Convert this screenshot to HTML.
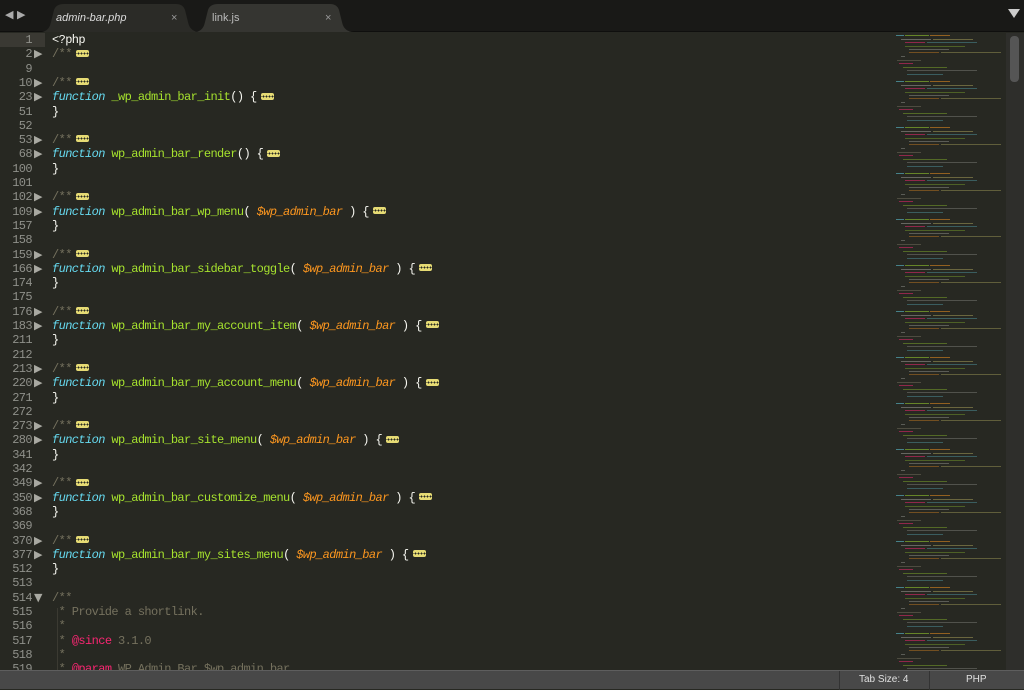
<!DOCTYPE html>
<html><head><meta charset="utf-8"><style>
*{margin:0;padding:0;box-sizing:border-box}
body{width:1024px;height:689px;overflow:hidden;background:#272822;font-family:"Liberation Mono",monospace;position:relative}
#tabs{position:absolute;left:0;top:0;width:1024px;height:32px;background:#191917;border-bottom:1px solid #0f0f0e}
.tab{position:absolute;top:4px;height:28px;font-family:"Liberation Sans",sans-serif;font-size:11px;color:#ddd;line-height:28px}
.tab .bg{position:absolute;inset:0}
.tab span{position:relative}
#ed{position:absolute;left:0;top:33px;width:893px;height:637px;background:#272822;overflow:hidden}
.ln{position:absolute;left:0;width:32px;text-align:right;color:#8f908a;font-size:12px;letter-spacing:-0.6px;line-height:14px}
.fa{position:absolute;left:34px;color:#a9a9a2;font-size:11px;line-height:14px;font-family:"DejaVu Sans",sans-serif}
.code{position:absolute;left:52px;font-size:12px;letter-spacing:-0.6px;line-height:14px;color:#f8f8f2;white-space:pre}
.k{color:#66d9ef;font-style:italic}.f{color:#a6e22e}.p{color:#fd971f;font-style:italic}.c{color:#75715e}.t{color:#f92672}
.b{display:inline-block;width:13px;height:7px;background:#e6db74;border-radius:2px;vertical-align:middle;margin-left:4px;position:relative;top:-1px;background-image:radial-gradient(circle,#272822 0.8px,transparent 1px);background-size:3px 7px;background-position:1px 0}
</style></head><body>
<div id="tabs">
<div style="position:absolute;left:5px;top:8px;color:#aaa;font-size:11px;font-family:'DejaVu Sans'">◀ ▶</div>
<div class="tab" style="left:40px;width:160px"><svg class="bg" width="160" height="28"><path d="M0 28 Q9 28 11 18 L14 6 Q16 0 24 0 L136 0 Q143 0 145 6 L148 18 Q150 28 160 28Z" fill="#2b2b27"/></svg><span style="left:16px;font-style:italic">admin-bar.php</span><span style="position:absolute;left:131px;color:#999">×</span></div>
<div class="tab" style="left:194px;width:160px"><svg class="bg" width="160" height="28"><path d="M0 28 Q9 28 11 18 L14 6 Q16 0 24 0 L136 0 Q143 0 145 6 L148 18 Q150 28 160 28Z" fill="#353531"/></svg><span style="left:18px;color:#bbb">link.js</span><span style="position:absolute;left:131px;color:#999">×</span></div>
<div style="position:absolute;left:1008px;top:9px;width:0;height:0;border-left:6px solid transparent;border-right:6px solid transparent;border-top:9px solid #ccc"></div>
</div>
<div id="ed">
<div style="position:absolute;left:0;top:0;width:45px;height:14px;background:#3a3933"></div>
<div style="position:absolute;left:57px;top:575px;width:1px;height:70px;background:#3b3a32"></div>
</div>
<svg style="position:absolute;left:893px;top:33px" width="131" height="637">
<defs><pattern id="mm" width="120" height="46" patternUnits="userSpaceOnUse">
<rect x="3" y="2" width="8" height="1" fill="#66d9ef"/><rect x="12" y="2" width="24" height="1" fill="#a6e22e"/><rect x="37" y="2" width="20" height="1" fill="#fd971f"/>
<rect x="8" y="6" width="30" height="1" fill="#f8f8f2" opacity=".6"/><rect x="40" y="6" width="40" height="1" fill="#e6db74" opacity=".7"/>
<rect x="12" y="9" width="20" height="1" fill="#f92672"/><rect x="34" y="9" width="50" height="1" fill="#66d9ef" opacity=".6"/>
<rect x="12" y="13" width="60" height="1" fill="#a6e22e" opacity=".6"/><rect x="16" y="16" width="40" height="1" fill="#f8f8f2" opacity=".5"/>
<rect x="16" y="19" width="30" height="1" fill="#fd971f" opacity=".7"/><rect x="48" y="19" width="60" height="1" fill="#e6db74" opacity=".6"/>
<rect x="8" y="23" width="4" height="1" fill="#f8f8f2" opacity=".5"/><rect x="4" y="27" width="24" height="1" fill="#75715e"/>
<rect x="6" y="30" width="14" height="1" fill="#f92672"/><rect x="10" y="34" width="44" height="1" fill="#a6e22e" opacity=".7"/>
<rect x="14" y="37" width="70" height="1" fill="#f8f8f2" opacity=".4"/><rect x="14" y="41" width="36" height="1" fill="#66d9ef" opacity=".6"/>
</pattern></defs>
<rect x="0" y="0" width="113" height="637" fill="url(#mm)" opacity=".5"/>
<rect x="113" y="0" width="18" height="637" fill="#2e2e2b"/>
<rect x="117" y="3" width="9" height="46" rx="4" fill="#555"/>
</svg>
<div style="position:absolute;left:0;top:33px;width:893px">
<div class="ln" style="top:0">1</div><div class="code" style="top:0">&lt;?php</div>
<div class="ln" style="top:14.3px">2</div><div class="fa" style="top:14.3px">▶</div><div class="code c" style="top:14.3px">/**<span class="b"></span></div>
<div class="ln" style="top:28.6px">9</div>
<div class="ln" style="top:42.9px">10</div><div class="fa" style="top:42.9px">▶</div><div class="code c" style="top:42.9px">/**<span class="b"></span></div>
<div class="ln" style="top:57.2px">23</div><div class="fa" style="top:57.2px">▶</div><div class="code" style="top:57.2px"><span class="k">function</span> <span class="f">_wp_admin_bar_init</span>() {<span class="b"></span></div>
<div class="ln" style="top:71.5px">51</div><div class="code" style="top:71.5px">}</div>
<div class="ln" style="top:85.8px">52</div>
<div class="ln" style="top:100.1px">53</div><div class="fa" style="top:100.1px">▶</div><div class="code c" style="top:100.1px">/**<span class="b"></span></div>
<div class="ln" style="top:114.4px">68</div><div class="fa" style="top:114.4px">▶</div><div class="code" style="top:114.4px"><span class="k">function</span> <span class="f">wp_admin_bar_render</span>() {<span class="b"></span></div>
<div class="ln" style="top:128.7px">100</div><div class="code" style="top:128.7px">}</div>
<div class="ln" style="top:143px">101</div>
<div class="ln" style="top:157.3px">102</div><div class="fa" style="top:157.3px">▶</div><div class="code c" style="top:157.3px">/**<span class="b"></span></div>
<div class="ln" style="top:171.6px">109</div><div class="fa" style="top:171.6px">▶</div><div class="code" style="top:171.6px"><span class="k">function</span> <span class="f">wp_admin_bar_wp_menu</span>( <span class="p">$wp_admin_bar</span> ) {<span class="b"></span></div>
<div class="ln" style="top:185.9px">157</div><div class="code" style="top:185.9px">}</div>
<div class="ln" style="top:200.2px">158</div>
<div class="ln" style="top:214.5px">159</div><div class="fa" style="top:214.5px">▶</div><div class="code c" style="top:214.5px">/**<span class="b"></span></div>
<div class="ln" style="top:228.8px">166</div><div class="fa" style="top:228.8px">▶</div><div class="code" style="top:228.8px"><span class="k">function</span> <span class="f">wp_admin_bar_sidebar_toggle</span>( <span class="p">$wp_admin_bar</span> ) {<span class="b"></span></div>
<div class="ln" style="top:243.1px">174</div><div class="code" style="top:243.1px">}</div>
<div class="ln" style="top:257.4px">175</div>
<div class="ln" style="top:271.7px">176</div><div class="fa" style="top:271.7px">▶</div><div class="code c" style="top:271.7px">/**<span class="b"></span></div>
<div class="ln" style="top:286px">183</div><div class="fa" style="top:286px">▶</div><div class="code" style="top:286px"><span class="k">function</span> <span class="f">wp_admin_bar_my_account_item</span>( <span class="p">$wp_admin_bar</span> ) {<span class="b"></span></div>
<div class="ln" style="top:300.3px">211</div><div class="code" style="top:300.3px">}</div>
<div class="ln" style="top:314.6px">212</div>
<div class="ln" style="top:328.9px">213</div><div class="fa" style="top:328.9px">▶</div><div class="code c" style="top:328.9px">/**<span class="b"></span></div>
<div class="ln" style="top:343.2px">220</div><div class="fa" style="top:343.2px">▶</div><div class="code" style="top:343.2px"><span class="k">function</span> <span class="f">wp_admin_bar_my_account_menu</span>( <span class="p">$wp_admin_bar</span> ) {<span class="b"></span></div>
<div class="ln" style="top:357.5px">271</div><div class="code" style="top:357.5px">}</div>
<div class="ln" style="top:371.8px">272</div>
<div class="ln" style="top:386.1px">273</div><div class="fa" style="top:386.1px">▶</div><div class="code c" style="top:386.1px">/**<span class="b"></span></div>
<div class="ln" style="top:400.4px">280</div><div class="fa" style="top:400.4px">▶</div><div class="code" style="top:400.4px"><span class="k">function</span> <span class="f">wp_admin_bar_site_menu</span>( <span class="p">$wp_admin_bar</span> ) {<span class="b"></span></div>
<div class="ln" style="top:414.7px">341</div><div class="code" style="top:414.7px">}</div>
<div class="ln" style="top:429px">342</div>
<div class="ln" style="top:443.3px">349</div><div class="fa" style="top:443.3px">▶</div><div class="code c" style="top:443.3px">/**<span class="b"></span></div>
<div class="ln" style="top:457.6px">350</div><div class="fa" style="top:457.6px">▶</div><div class="code" style="top:457.6px"><span class="k">function</span> <span class="f">wp_admin_bar_customize_menu</span>( <span class="p">$wp_admin_bar</span> ) {<span class="b"></span></div>
<div class="ln" style="top:471.9px">368</div><div class="code" style="top:471.9px">}</div>
<div class="ln" style="top:486.2px">369</div>
<div class="ln" style="top:500.5px">370</div><div class="fa" style="top:500.5px">▶</div><div class="code c" style="top:500.5px">/**<span class="b"></span></div>
<div class="ln" style="top:514.8px">377</div><div class="fa" style="top:514.8px">▶</div><div class="code" style="top:514.8px"><span class="k">function</span> <span class="f">wp_admin_bar_my_sites_menu</span>( <span class="p">$wp_admin_bar</span> ) {<span class="b"></span></div>
<div class="ln" style="top:529.1px">512</div><div class="code" style="top:529.1px">}</div>
<div class="ln" style="top:543.4px">513</div>
<div class="ln" style="top:557.7px">514</div><div class="fa" style="top:557.7px">▼</div><div class="code c" style="top:557.7px">/**</div>
<div class="ln" style="top:572px">515</div><div class="code c" style="top:572px"> * Provide a shortlink.</div>
<div class="ln" style="top:586.3px">516</div><div class="code c" style="top:586.3px"> *</div>
<div class="ln" style="top:600.6px">517</div><div class="code c" style="top:600.6px"> * <span class="t">@since</span> 3.1.0</div>
<div class="ln" style="top:614.9px">518</div><div class="code c" style="top:614.9px"> *</div>
<div class="ln" style="top:629.2px">519</div><div class="code c" style="top:629.2px"> * <span class="t">@param</span> WP_Admin_Bar $wp_admin_bar</div>
</div>
<div style="position:absolute;left:0;top:670px;width:1024px;height:19px;background:#484848;border-top:1px solid #5e5e5e;font-family:'Liberation Sans',sans-serif;font-size:10px;color:#e0e0e0">
<div style="position:absolute;left:839px;top:0;width:1px;height:19px;background:#333"></div>
<div style="position:absolute;left:929px;top:0;width:1px;height:19px;background:#333"></div>
<div style="position:absolute;left:859px;top:3px">Tab Size: 4</div>
<div style="position:absolute;left:966px;top:3px">PHP</div>
</div>
</body></html>
